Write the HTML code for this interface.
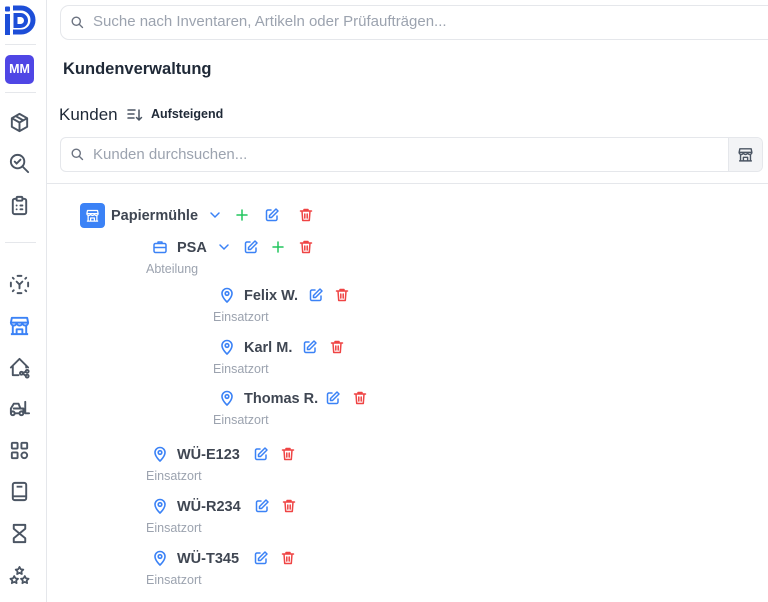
<!DOCTYPE html>
<html><head><meta charset="utf-8"><style>
*{margin:0;padding:0;box-sizing:border-box}
body{width:768px;height:602px;overflow:hidden;background:#fff;font-family:"Liberation Sans",sans-serif;position:relative;color:#374151}
.a{position:absolute}
.side{left:0;top:0;width:47px;height:602px;border-right:1px solid #e5e7eb;background:#fff}
.hr{position:absolute;left:5px;width:31px;height:1px;background:#e5e7eb}
.ic{position:absolute;left:8px;width:23px;height:23px}
svg{display:block}
.t{position:absolute;font-size:14.5px;font-weight:bold;color:#3f4652;line-height:18px;top:0}
.s{position:absolute;font-size:12.5px;color:#9ca3af;line-height:14px}
.i{position:absolute;width:16px;height:16px}
</style></head><body>
<div class="a side">
 <svg class="a" style="left:4px;top:5px" width="32" height="32" viewBox="0 0 32 32"><rect x="1" y="1.5" width="5" height="5" rx="1" fill="#1d4ed8"/><rect x="1" y="9" width="5" height="21" fill="#1d4ed8"/><path d="M9 3h8a12 12 0 0 1 0 24H9" fill="none" stroke="#1d4ed8" stroke-width="5"/><path d="M11.5 10h5a5.5 5.5 0 0 1 0 11h-5z" fill="none" stroke="#1d4ed8" stroke-width="4"/></svg>
 <div class="hr" style="top:44px"></div>
 <div class="a" style="left:5px;top:55px;width:29px;height:29px;background:#4f46e5;border-radius:5px;color:#fff;font-weight:bold;font-size:12.5px;line-height:29px;text-align:center">MM</div>
 <div class="hr" style="top:92px"></div>
 <div class="ic" style="top:111px"><svg viewBox="0 0 24 24" width="23" height="23" fill="none" stroke="#4b5563" stroke-width="2" stroke-linejoin="round"><path d="M12 3l8 4.5v9L12 21l-8-4.5v-9z M4 7.5l8 4.5 8-4.5 M12 12v9 M8 5.3l8 4.5"/></svg></div>
 <div class="ic" style="top:152px"><svg viewBox="0 0 24 24" width="23" height="23" fill="none" stroke="#4b5563" stroke-width="2" stroke-linecap="round"><circle cx="10" cy="10" r="7"/><path d="M21 21l-6-6 M7 10l2 2 4-4"/></svg></div>
 <div class="ic" style="top:194px"><svg viewBox="0 0 24 24" width="23" height="23" fill="none" stroke="#4b5563" stroke-width="2" stroke-linecap="round"><path d="M9 5H7a2 2 0 0 0-2 2v12a2 2 0 0 0 2 2h10a2 2 0 0 0 2-2V7a2 2 0 0 0-2-2h-2"/><rect x="9" y="3" width="6" height="4" rx="1"/><path d="M9 12h.01M13 12h2M9 16h.01M13 16h2"/></svg></div>
 <div class="hr" style="top:242px"></div>
 <div class="ic" style="top:273px"><svg viewBox="0 0 24 24" width="23" height="23" fill="none" stroke="#4b5563" stroke-width="2" stroke-linecap="round"><path d="M10 3h4M3 10v4M21 10v4M10 21h4M5 5l1 1M19 5l-1 1M5 19l1-1M19 19l-1-1 M9 9l3 3 3-3M12 12v4"/></svg></div>
 <div class="ic" style="top:314px"><svg viewBox="0 0 24 24" width="23" height="23" fill="none" stroke="#3b82f6" stroke-width="2" stroke-linejoin="round"><path d="M3 21h18M4 4h16l1 5H3z M3 9a3 3 0 0 0 6 0 3 3 0 0 0 6 0 3 3 0 0 0 6 0M5 11v10M19 11v10M9 21v-5h6v5"/></svg></div>
 <div class="ic" style="top:356px"><svg viewBox="0 0 24 24" width="23" height="23" fill="none" stroke="#4b5563" stroke-width="2" stroke-linecap="round" stroke-linejoin="round"><path d="M3 12l9-9 9 9M5 10v10h6M19 10v2"/><circle cx="20" cy="16" r="1.5"/><circle cx="14" cy="18" r="1.5"/><circle cx="20" cy="21" r="1.5"/><path d="M15.5 17.5l3-1M15.5 18.5l3 2"/></svg></div>
 <div class="ic" style="top:397px"><svg viewBox="0 0 24 24" width="23" height="23" fill="none" stroke="#4b5563" stroke-width="2" stroke-linecap="round" stroke-linejoin="round"><circle cx="5" cy="17" r="2"/><circle cx="14" cy="17" r="2"/><path d="M3 17v-5l3-5h5l2 5h3v5M7 17h5M18 5v12h4M6 12h7"/></svg></div>
 <div class="ic" style="top:439px"><svg viewBox="0 0 24 24" width="23" height="23" fill="none" stroke="#4b5563" stroke-width="2"><rect x="4" y="4" width="6" height="6" rx="1"/><rect x="14" y="4" width="6" height="6" rx="1"/><rect x="4" y="14" width="6" height="6" rx="1"/><circle cx="17" cy="17" r="3"/></svg></div>
 <div class="ic" style="top:480px"><svg viewBox="0 0 24 24" width="23" height="23" fill="none" stroke="#4b5563" stroke-width="2"><rect x="5" y="3" width="14" height="18" rx="2"/><path d="M5 17h14M9 7h6"/></svg></div>
 <div class="ic" style="top:522px"><svg viewBox="0 0 24 24" width="23" height="23" fill="none" stroke="#4b5563" stroke-width="2" stroke-linejoin="round"><path d="M6 3h12v4l-6 5-6-5zM6 21h12v-4l-6-5-6 5z"/></svg></div>
 <div class="ic" style="top:564px"><svg viewBox="0 0 24 24" width="23" height="23" fill="none" stroke="#4b5563" stroke-width="1.8" stroke-linejoin="round"><path d="M12 3l1.3 2.5 2.7.4-2 1.9.5 2.7-2.5-1.3-2.5 1.3.5-2.7-2-1.9 2.7-.4zM6.5 12.5l1.3 2.5 2.7.4-2 1.9.5 2.7-2.5-1.3-2.5 1.3.5-2.7-2-1.9 2.7-.4zM17.5 12.5l1.3 2.5 2.7.4-2 1.9.5 2.7-2.5-1.3-2.5 1.3.5-2.7-2-1.9 2.7-.4z"/></svg></div>
</div>

<div class="a" style="left:60px;top:5px;width:720px;height:35px;border:1px solid #e5e7eb;border-radius:9px;background:#fff"></div>
<div class="a" style="left:70px;top:15px"><svg viewBox="0 0 24 24" width="15" height="15" fill="none" stroke="#6b7280" stroke-width="2.2" stroke-linecap="round"><circle cx="10" cy="10" r="6.5"/><path d="M15 15l5 5"/></svg></div>
<div class="a" style="left:93px;top:13px;font-size:15px;color:#9ca3af;line-height:18px">Suche nach Inventaren, Artikeln oder Prüfaufträgen...</div>

<div class="a" style="left:63px;top:59px;font-size:16.5px;font-weight:bold;color:#1f2937;line-height:20px">Kundenverwaltung</div>
<div class="a" style="left:59px;top:105px;font-size:17px;color:#1f2937;line-height:20px">Kunden</div>
<div class="a" style="left:127px;top:107px"><svg viewBox="0 0 16 16" width="16" height="16" fill="none" stroke="#4b5563" stroke-width="1.5" stroke-linecap="round"><path d="M1 3h7M1 7h6M1 11h6M12 3v10M9.5 10.5L12 13l2.5-2.5"/></svg></div>
<div class="a" style="left:151px;top:106px;font-size:12.5px;font-weight:bold;color:#1f2937;line-height:16px">Aufsteigend</div>

<div class="a" style="left:60px;top:137px;width:703px;height:35px;border:1px solid #e5e7eb;border-radius:6px;background:#fff;overflow:hidden"><div class="a" style="right:0;top:0;width:34px;height:35px;background:#f3f4f6;border-left:1px solid #e5e7eb"></div></div>
<div class="a" style="left:737px;top:146px"><svg viewBox="0 0 24 24" width="17" height="17" fill="none" stroke="#4b5563" stroke-width="2" stroke-linejoin="round"><path d="M3 21h18M4 4h16l1 5H3z M3 9a3 3 0 0 0 6 0 3 3 0 0 0 6 0 3 3 0 0 0 6 0M5 11v10M19 11v10M9 21v-5h6v5"/></svg></div>
<div class="a" style="left:70px;top:147px"><svg viewBox="0 0 24 24" width="15" height="15" fill="none" stroke="#6b7280" stroke-width="2.2" stroke-linecap="round"><circle cx="10" cy="10" r="6.5"/><path d="M15 15l5 5"/></svg></div>
<div class="a" style="left:93px;top:146px;font-size:15px;color:#9ca3af;line-height:18px">Kunden durchsuchen...</div>
<div class="a" style="left:47px;top:183px;width:721px;height:1px;background:#e5e7eb"></div>

<svg width="0" height="0" style="position:absolute"><defs>
<g id="chev"><path d="M4 6l4 4 4-4" fill="none" stroke="#3b82f6" stroke-width="1.5" stroke-linecap="round"/></g>
<g id="plus"><path d="M8 3v10M3 8h10" fill="none" stroke="#22c55e" stroke-width="1.5" stroke-linecap="round"/></g>
<g id="edit"><g fill="none" stroke="#3b82f6" stroke-width="1.5" stroke-linecap="round" stroke-linejoin="round"><path d="M7 3H4a1.5 1.5 0 0 0-1.5 1.5v7.5A1.5 1.5 0 0 0 4 13.5h7.5A1.5 1.5 0 0 0 13 12V9"/><path d="M12 2l2 2-6.5 6.5H5.5v-2z"/></g></g>
<g id="del"><g fill="none" stroke="#ef4444" stroke-width="1.5" stroke-linecap="round" stroke-linejoin="round"><path d="M2.5 4h11M6 4V2.5h4V4M4 4l.7 9.5h6.6L12 4M6.8 7v4M9.2 7v4"/></g></g>
<g id="pin"><g fill="none" stroke="#3b82f6" stroke-width="1.6"><path d="M8 15s-5-4.5-5-8.5a5 5 0 0 1 10 0C13 10.5 8 15 8 15z"/><circle cx="8" cy="6.5" r="1.8"/></g></g>
<g id="brief"><g fill="none" stroke="#3b82f6" stroke-width="1.5" stroke-linejoin="round"><rect x="2" y="4.5" width="12" height="9" rx="1.5"/><path d="M6 4.5V3h4v1.5M2 8.5h12"/></g></g>
</defs></svg>

<div class="a" style="left:80px;top:203px;width:25px;height:25px;background:#3b82f6;border-radius:4px"></div>
<div class="a" style="left:85px;top:208px"><svg viewBox="0 0 24 24" width="15" height="15" fill="none" stroke="#fff" stroke-width="2" stroke-linejoin="round"><path d="M3 21h18M4 4h16l1 5H3z M3 9a3 3 0 0 0 6 0 3 3 0 0 0 6 0 3 3 0 0 0 6 0M5 11v10M19 11v10M9 21v-5h6v5"/></svg></div>
<div class="t" style="left:111px;top:207px">Papiermühle</div>

<svg class="i" style="left:207px;top:207px"><use href="#chev"/></svg>
<svg class="i" style="left:234px;top:207px"><use href="#plus"/></svg>
<svg class="i" style="left:264px;top:207px"><use href="#edit"/></svg>
<svg class="i" style="left:298px;top:207px"><use href="#del"/></svg>

<svg class="i" style="left:152px;top:239px"><use href="#brief"/></svg>
<div class="t" style="left:177px;top:239px">PSA</div>
<svg class="i" style="left:216px;top:239px"><use href="#chev"/></svg>
<svg class="i" style="left:243px;top:239px"><use href="#edit"/></svg>
<svg class="i" style="left:270px;top:239px"><use href="#plus"/></svg>
<svg class="i" style="left:298px;top:239px"><use href="#del"/></svg>
<div class="s" style="left:146px;top:262px">Abteilung</div>

<svg class="i" style="left:219px;top:287px"><use href="#pin"/></svg>
<div class="t" style="left:244px;top:287px">Felix W.</div>
<svg class="i" style="left:308px;top:287px"><use href="#edit"/></svg>
<svg class="i" style="left:334px;top:287px"><use href="#del"/></svg>
<div class="s" style="left:213px;top:310px">Einsatzort</div>

<svg class="i" style="left:219px;top:339px"><use href="#pin"/></svg>
<div class="t" style="left:244px;top:339px">Karl M.</div>
<svg class="i" style="left:302px;top:339px"><use href="#edit"/></svg>
<svg class="i" style="left:329px;top:339px"><use href="#del"/></svg>
<div class="s" style="left:213px;top:362px">Einsatzort</div>

<svg class="i" style="left:219px;top:390px"><use href="#pin"/></svg>
<div class="t" style="left:244px;top:390px">Thomas R.</div>
<svg class="i" style="left:325px;top:390px"><use href="#edit"/></svg>
<svg class="i" style="left:352px;top:390px"><use href="#del"/></svg>
<div class="s" style="left:213px;top:413px">Einsatzort</div>

<svg class="i" style="left:152px;top:446px"><use href="#pin"/></svg>
<div class="t" style="left:177px;top:446px">WÜ-E123</div>
<svg class="i" style="left:253px;top:446px"><use href="#edit"/></svg>
<svg class="i" style="left:280px;top:446px"><use href="#del"/></svg>
<div class="s" style="left:146px;top:469px">Einsatzort</div>

<svg class="i" style="left:152px;top:498px"><use href="#pin"/></svg>
<div class="t" style="left:177px;top:498px">WÜ-R234</div>
<svg class="i" style="left:254px;top:498px"><use href="#edit"/></svg>
<svg class="i" style="left:281px;top:498px"><use href="#del"/></svg>
<div class="s" style="left:146px;top:521px">Einsatzort</div>

<svg class="i" style="left:152px;top:550px"><use href="#pin"/></svg>
<div class="t" style="left:177px;top:550px">WÜ-T345</div>
<svg class="i" style="left:253px;top:550px"><use href="#edit"/></svg>
<svg class="i" style="left:280px;top:550px"><use href="#del"/></svg>
<div class="s" style="left:146px;top:573px">Einsatzort</div>
</body></html>
